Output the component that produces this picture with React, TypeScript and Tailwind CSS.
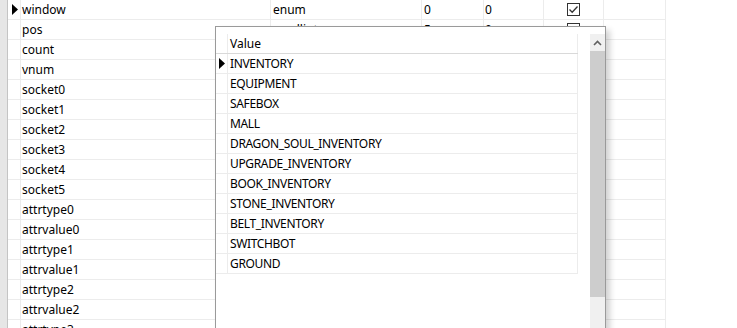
import React from "react";

type Row = { name: string; type: string; a: string; b: string; check: boolean };

// rows from index 2 on sit fully under the popup past the name column
const rows: Row[] = [
  { name: "window", type: "enum", a: "0", b: "0", check: true },
  { name: "pos", type: "smallint", a: "5", b: "0", check: true },
  { name: "count", type: "", a: "", b: "", check: false },
  { name: "vnum", type: "", a: "", b: "", check: false },
  { name: "socket0", type: "", a: "", b: "", check: false },
  { name: "socket1", type: "", a: "", b: "", check: false },
  { name: "socket2", type: "", a: "", b: "", check: false },
  { name: "socket3", type: "", a: "", b: "", check: false },
  { name: "socket4", type: "", a: "", b: "", check: false },
  { name: "socket5", type: "", a: "", b: "", check: false },
  { name: "attrtype0", type: "", a: "", b: "", check: false },
  { name: "attrvalue0", type: "", a: "", b: "", check: false },
  { name: "attrtype1", type: "", a: "", b: "", check: false },
  { name: "attrvalue1", type: "", a: "", b: "", check: false },
  { name: "attrtype2", type: "", a: "", b: "", check: false },
  { name: "attrvalue2", type: "", a: "", b: "", check: false },
  { name: "attrtype3", type: "", a: "", b: "", check: false },
];

const values = [
  "INVENTORY",
  "EQUIPMENT",
  "SAFEBOX",
  "MALL",
  "DRAGON_SOUL_INVENTORY",
  "UPGRADE_INVENTORY",
  "BOOK_INVENTORY",
  "STONE_INVENTORY",
  "BELT_INVENTORY",
  "SWITCHBOT",
  "GROUND",
];

function Arrow() {
  return (
    <svg width="6" height="11" viewBox="0 0 6 11">
      <path d="M0 0 L6 5.5 L0 11 Z" fill="#000" />
    </svg>
  );
}

function Check({ on }: { on: boolean }) {
  return (
    <div className="w-[13px] h-[13px] border border-[#333] bg-white flex items-center justify-center">
      {on && (
        <svg width="11" height="11" viewBox="0 0 11 11">
          <path d="M1.5 5.5 L4.2 8.3 L9.5 2.5" stroke="#333" strokeWidth="1.3" fill="none" />
        </svg>
      )}
    </div>
  );
}

export default function App() {
  return (
    <div
      className="relative w-[737px] h-[328px] overflow-hidden bg-white text-[12px] text-black"
      style={{ fontFamily: '"Noto Sans", "Segoe UI", sans-serif' }}
    >
      <div className="flex flex-col">
        {rows.map((r, i) => (
          <div key={r.name} className="flex h-[20px] shrink-0">
            <div className="w-[8px] bg-[#e6e6e6] border-r border-[#c4c4c4]" />
            <div className="w-[13px] flex items-center justify-center border-r border-b border-[#ececec] pl-[1px]">
              {i === 0 && <Arrow />}
            </div>
            <div className="w-[250px] flex items-center pl-[1px] border-r border-b border-[#ececec] leading-none">
              {r.name}
            </div>
            <div className="w-[151px] flex items-center pl-[2px] border-r border-b border-[#ececec] leading-none">
              {r.type}
            </div>
            <div className="w-[62px] flex items-center pl-[2px] border-r border-b border-[#ececec] leading-none">
              {r.a}
            </div>
            <div className="w-[60px] flex items-center pl-[1px] border-r border-b border-[#ececec] leading-none">
              {r.b}
            </div>
            <div className="w-[60px] flex items-center justify-center border-r border-b border-[#ececec]">
              {i < 2 && <Check on={r.check} />}
            </div>
            <div className="w-[62px] border-r border-b border-[#ececec]" />
          </div>
        ))}
      </div>

      <div className="absolute left-[215px] top-[26px] w-[391px] h-[320px] bg-white border border-[#9a9a9a] shadow-[4px_4px_6px_rgba(0,0,0,0.18)] pt-[7px] flex">
        <div className="w-[362px] flex flex-col">
          <div className="flex h-[20px] border-b border-[#d9d9d9]">
            <div className="w-[12px] border-r border-[#ececec]" />
            <div className="flex-1 flex items-center pl-[2px] border-r border-[#ececec] leading-none">Value</div>
          </div>
          {values.map((v, i) => (
            <div key={v} className="flex h-[20px] border-b border-[#ececec]">
              <div className="w-[12px] flex items-center justify-center border-r border-[#ececec] pl-[1px]">
                {i === 0 && <Arrow />}
              </div>
              <div className="flex-1 flex items-center pl-[2px] border-r border-[#ececec] leading-none tracking-[-0.35px]">
                {v}
              </div>
            </div>
          ))}
        </div>
        <div className="ml-[12px] w-[15px] flex flex-col bg-[#f0f0f0]">
          <div className="h-[17px] flex items-center justify-center">
            <svg width="9" height="6" viewBox="0 0 9 6">
              <path d="M1 5 L4.5 1.5 L8 5" stroke="#606060" strokeWidth="1.6" fill="none" />
            </svg>
          </div>
          <div className="h-[246px] bg-[#cdcdcd]" />
        </div>
      </div>
    </div>
  );
}
